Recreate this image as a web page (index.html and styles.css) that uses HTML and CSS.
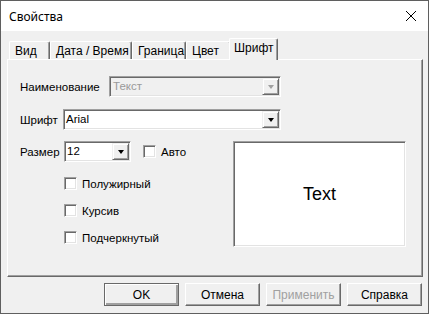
FILE: index.html
```html
<!DOCTYPE html>
<html>
<head>
<meta charset="utf-8">
<title>Свойства</title>
<link rel="stylesheet" href="styles.css">
</head>
<body>
<div class="window">
  <div class="titlebar">
    <span class="title">Свойства</span>
    <svg class="close" width="12" height="12" viewBox="0 0 12 12"><path d="M1 1L11 11M11 1L1 11" stroke="#000" stroke-width="1" fill="none"/></svg>
  </div>
  <div class="client">
    <div class="tabs">
      <div class="tab t1">Вид</div>
      <div class="tab t2">Дата / Время</div>
      <div class="tab t3">Граница</div>
      <div class="tab t4">Цвет</div>
      <div class="tab active">Шрифт</div>
    </div>
    <div class="panel">
      <div class="row">
        <span class="lbl l-name">Наименование</span>
        <div class="combo disabled w-name"><span class="val">Текст</span><span class="dd"><i class="arrow"></i></span></div>
      </div>
      <div class="row r2">
        <span class="lbl l-font">Шрифт</span>
        <div class="combo w-font"><span class="val">Arial</span><span class="dd"><i class="arrow"></i></span></div>
      </div>
      <div class="r3">
        <div class="leftcol">
          <div class="row">
            <span class="lbl l-size">Размер</span>
            <div class="combo w-size"><span class="val">12</span><span class="dd"><i class="arrow"></i></span></div>
            <span class="cb cb-auto"></span><span class="cblbl">Авто</span>
          </div>
          <div class="checkrow first"><span class="cb"></span><span class="cblbl">Полужирный</span></div>
          <div class="checkrow"><span class="cb"></span><span class="cblbl">Курсив</span></div>
          <div class="checkrow"><span class="cb"></span><span class="cblbl">Подчеркнутый</span></div>
        </div>
        <div class="preview">Text</div>
      </div>
    </div>
    <div class="buttons">
      <div class="btn default">OK</div>
      <div class="btn">Отмена</div>
      <div class="btn disabled">Применить</div>
      <div class="btn">Справка</div>
    </div>
  </div>
</div>
</body>
</html>
```
FILE: styles.css
```css
* { box-sizing: border-box; margin: 0; padding: 0; }
body {
  margin: 0;
  background: #fff;
  font-family: "Liberation Sans", Arial, sans-serif;
  font-size: 12px;
  color: #000;
}
.window {
  width: 429px;
  height: 314px;
  border: 1px solid #5f5f5f;
  display: flex;
  flex-direction: column;
  background: #f0f0f0;
}
.titlebar {
  height: 30px;
  flex: none;
  background: #fff;
  display: flex;
  align-items: center;
  justify-content: space-between;
  padding: 0 11px 0 8px;
}
.title {
  font-family: "Noto Sans", "Open Sans", sans-serif;
  font-size: 12px;
}
.close { display: block; }
.client {
  flex: 1;
  padding: 7px 5px 0 6px;
  display: flex;
  flex-direction: column;
}
.tabs {
  height: 21px;
  display: flex;
  align-items: flex-end;
  padding-left: 2px;
  position: relative;
  z-index: 1;
}
.tab {
  height: 18px;
  flex: none;
  background: #f0f0f0;
  border-top: 1px solid #fff;
  border-left: 1px solid #fff;
  border-right: 1px solid #696969;
  box-shadow: inset -1px 0 #a0a0a0;
  border-top-left-radius: 2px;
  border-top-right-radius: 2px;
  padding: 2px 0 0 5px;
  line-height: 14px;
  white-space: nowrap;
}
.t1 { width: 41px; }
.t2 { width: 82px; }
.t3 { width: 54px; }
.t4 { width: 45px; }
.tab.active {
  width: 49px;
  height: 22px;
  margin-left: -2px;
  margin-bottom: -1px;
  padding-left: 4px;
}
.panel {
  height: 218px;
  border-top: 1px solid #fff;
  border-left: 1px solid #fff;
  border-right: 1px solid #696969;
  border-bottom: 1px solid #696969;
  box-shadow: inset -1px -1px #a0a0a0;
  padding: 16px 0 0 12px;
  font-size: 11.5px;
}
.row {
  display: flex;
  align-items: center;
  height: 21px;
}
.r2 { margin-top: 12px; }
.lbl { white-space: nowrap; flex: none; }
.l-name { width: 89px; }
.l-font { width: 43px; }
.l-size { width: 44px; }
.combo {
  height: 21px;
  flex: none;
  display: flex;
  background: #fff;
  border-top: 1px solid #a0a0a0;
  border-left: 1px solid #a0a0a0;
  border-right: 1px solid #fff;
  border-bottom: 1px solid #fff;
  box-shadow: inset 1px 1px #696969, inset -1px -1px #e3e3e3;
  padding: 1px;
}
.w-name { width: 172px; }
.w-font { width: 218px; }
.w-size { width: 67px; }
.val {
  flex: 1;
  padding-left: 1px;
  line-height: 17px;
}
.combo.disabled { background: #f0f0f0; }
.combo.disabled .val { color: #9a9a9a; padding-left: 2px; }
.dd {
  width: 17px;
  height: 17px;
  flex: none;
  background: #f0f0f0;
  border-top: 1px solid #f0f0f0;
  border-left: 1px solid #f0f0f0;
  border-right: 1px solid #696969;
  border-bottom: 1px solid #696969;
  box-shadow: inset 1px 1px #fff, inset -1px -1px #a0a0a0;
  display: flex;
  align-items: center;
  justify-content: center;
}
.arrow {
  display: block;
  width: 1px;
  height: 0;
  border-left: 3px solid transparent;
  border-right: 3px solid transparent;
  border-top: 4px solid #000;
  margin-top: 1px;
}
.combo.disabled .arrow { border-top-color: #a0a0a0; }
.r3 {
  display: flex;
  margin-top: 11px;
}
.leftcol { width: 213px; flex: none; }
.cb {
  width: 13px;
  height: 13px;
  flex: none;
  background: #fff;
  border-top: 1px solid #a0a0a0;
  border-left: 1px solid #a0a0a0;
  border-right: 1px solid #fff;
  border-bottom: 1px solid #fff;
  box-shadow: inset 1px 1px #696969, inset -1px -1px #e3e3e3;
}
.cb-auto { margin-left: 12px; }
.cblbl { margin-left: 5px; white-space: nowrap; }
.checkrow {
  display: flex;
  align-items: center;
  height: 13px;
  padding-left: 44px;
  margin-top: 14px;
}
.checkrow.first { margin-top: 15px; }
.preview {
  width: 173px;
  height: 106px;
  flex: none;
  background: #fff;
  border-top: 1px solid #a0a0a0;
  border-left: 1px solid #a0a0a0;
  border-right: 1px solid #fff;
  border-bottom: 1px solid #fff;
  box-shadow: inset 1px 1px #696969, inset -1px -1px #e3e3e3;
  display: flex;
  align-items: center;
  justify-content: center;
  font-size: 18px;
  line-height: 18px;
}
.buttons {
  display: flex;
  justify-content: flex-end;
  gap: 6px;
  margin-top: 6px;
  padding-right: 1px;
}
.btn {
  width: 75px;
  height: 23px;
  background: #f0f0f0;
  border-top: 1px solid #fff;
  border-left: 1px solid #fff;
  border-right: 1px solid #696969;
  border-bottom: 1px solid #696969;
  box-shadow: inset -1px -1px #a0a0a0;
  display: flex;
  align-items: center;
  justify-content: center;
}
.btn.default {
  border: 1px solid #696969;
  box-shadow: inset 1px 1px #fff, inset -1px -1px #a0a0a0, inset -2px -2px #a0a0a0;
}
.btn.disabled { color: #a0a0a0; }
```
